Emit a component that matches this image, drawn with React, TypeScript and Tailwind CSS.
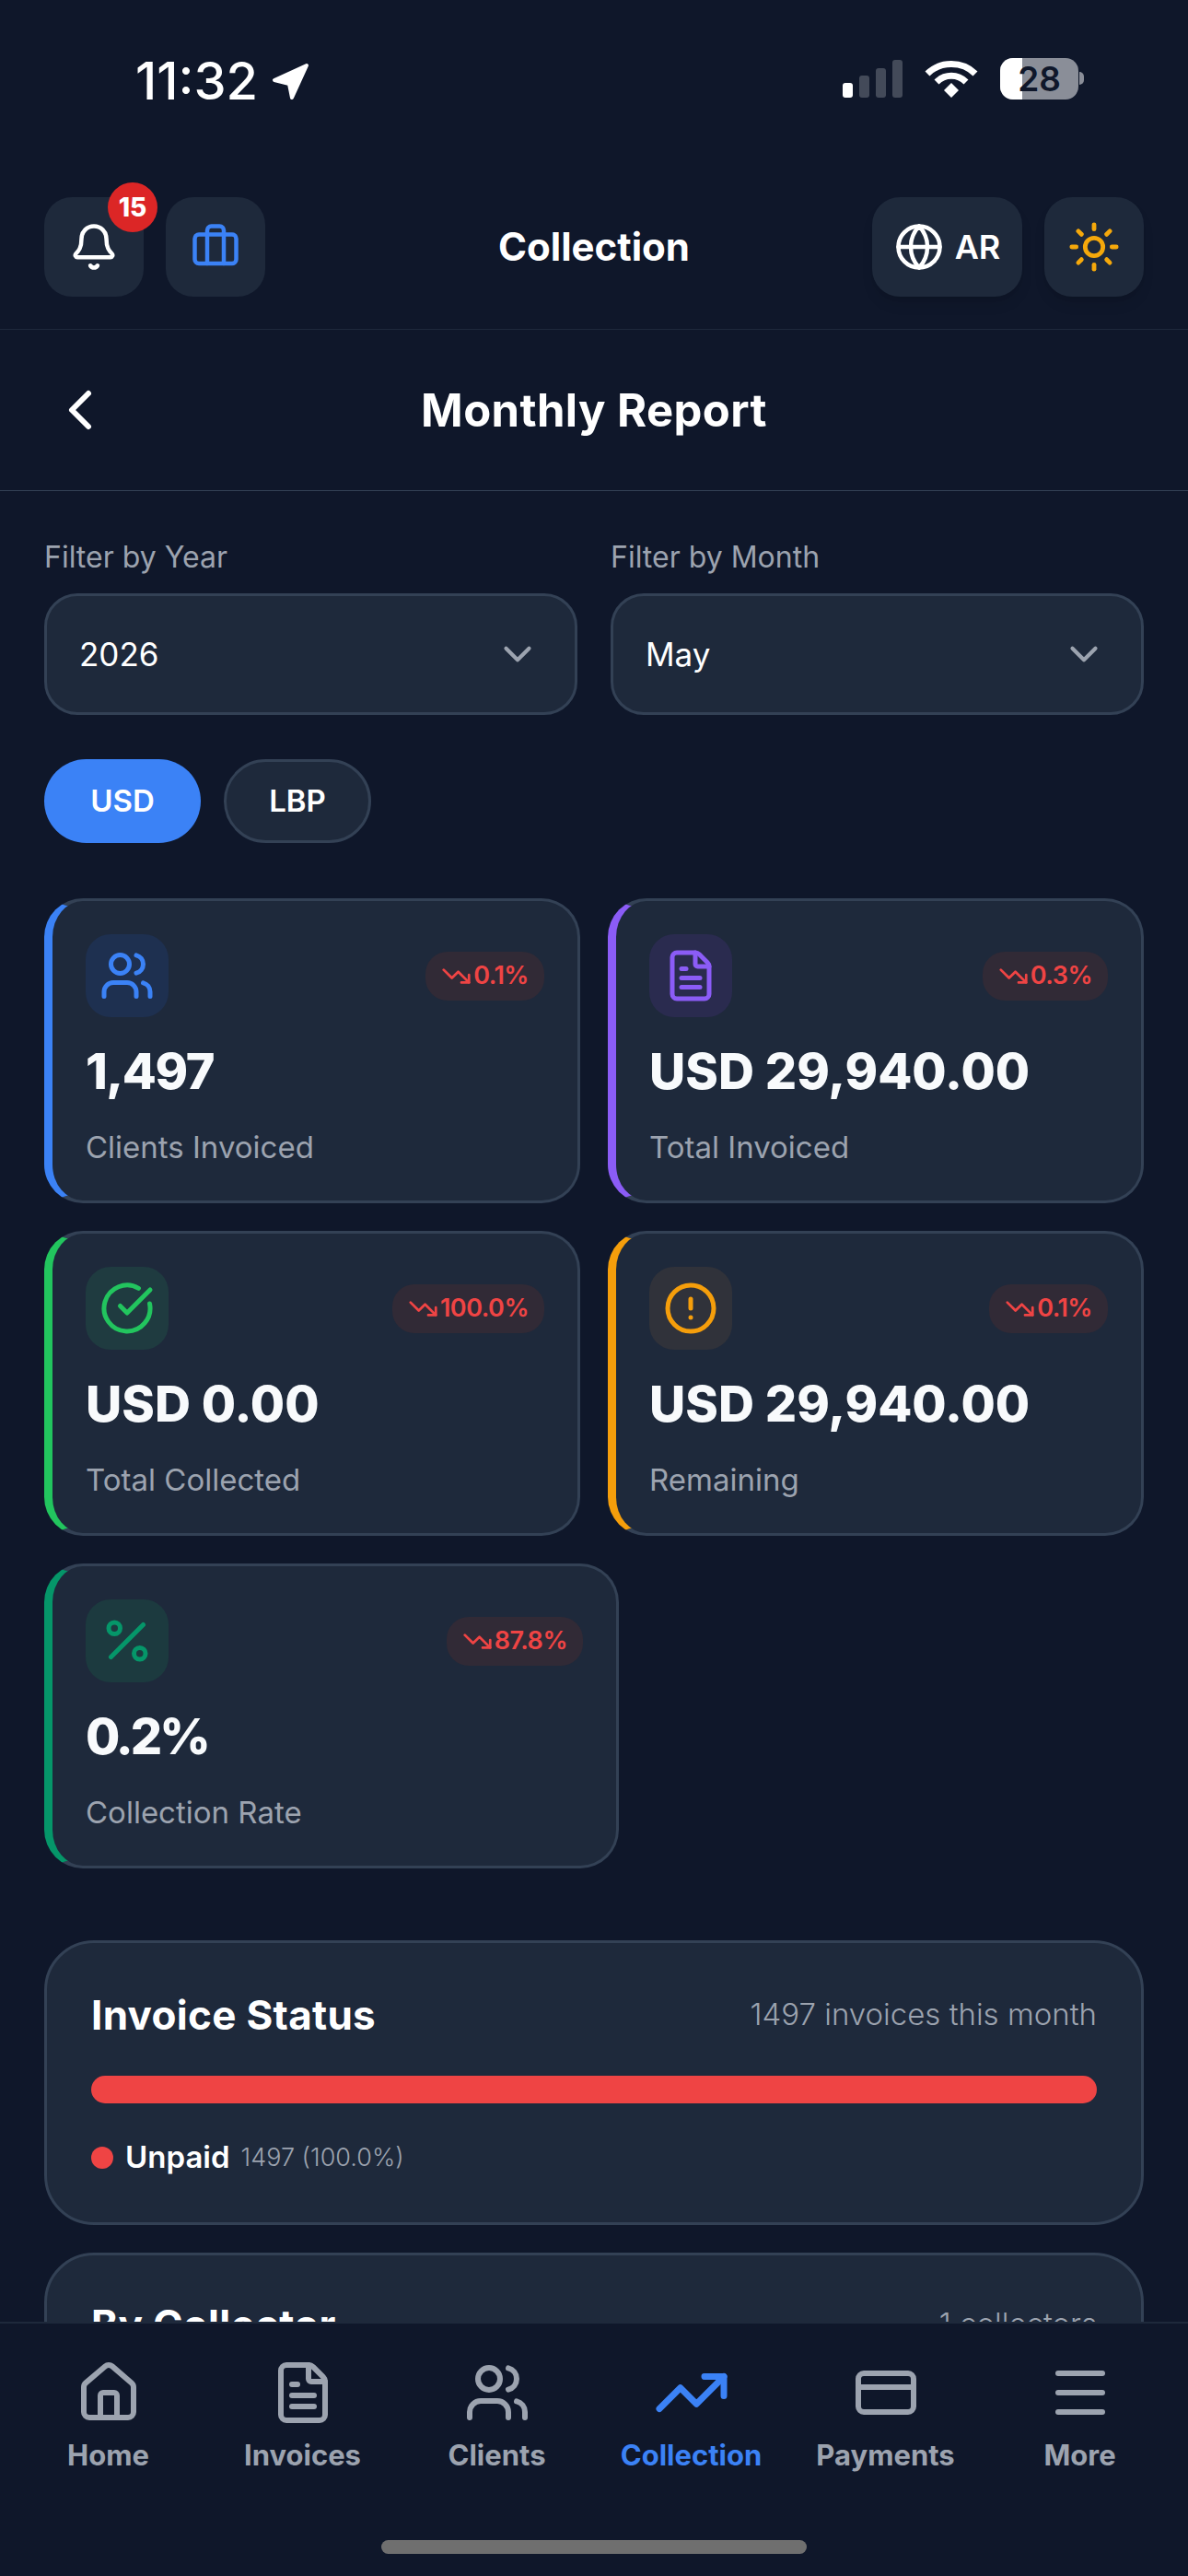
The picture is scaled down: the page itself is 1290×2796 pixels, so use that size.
import { AlertCircle, Bell, Briefcase, CheckCircle, ChevronDown, ChevronLeft, CreditCard, FileText, Globe, Home, Menu, Percent, Sun, TrendingDown, TrendingUp, Users } from "lucide-react";
import type { ReactNode } from "react";

function StatusBar() {
  return (
    <div className="h-[214px] shrink-0 flex items-start justify-between pl-[147px] pr-[113px] pt-[60px]">
      <div className="flex items-center gap-[14px] h-[56px] text-white text-[56px] font-medium leading-none">
        <span>11:32</span>
        <svg width="44" height="44" viewBox="0 0 44 44" className="fill-white stroke-white" strokeWidth="4" strokeLinejoin="round">
          <path d="M39 5 L4 21 L20 25 L23 40 Z" />
        </svg>
      </div>
      <div className="flex items-center gap-[24px] h-[50px]">
        <div className="flex items-end gap-[7px] h-[41px]">
          <div className="w-[11px] h-[16px] rounded-[3px] bg-white" />
          <div className="w-[11px] h-[24px] rounded-[3px] bg-[#434a59]" />
          <div className="w-[11px] h-[32px] rounded-[3px] bg-[#434a59]" />
          <div className="w-[11px] h-[41px] rounded-[3px] bg-[#434a59]" />
        </div>
        <svg width="58" height="42" viewBox="0 0 58 42" fill="none" stroke="white" strokeWidth="7">
          <path d="M3 16 C17 2 41 2 55 16" />
          <path d="M13 25 C22 16 36 16 45 25" />
          <path d="M21 34 L29 26 L37 34 L29 42 Z" fill="white" stroke="none" />
        </svg>
        <div className="flex items-center gap-[1px]">
          <div className="relative w-[85px] h-[45px] rounded-[14px] overflow-hidden bg-[#8a8e98] flex items-center justify-center">
            <div className="absolute left-0 top-0 bottom-0 w-[24px] bg-white" />
            <span className="relative text-[#0f172a] text-[37px] font-semibold leading-none">28</span>
          </div>
          <div className="w-[5px] h-[14px] rounded-r-full bg-[#8a8e98]" />
        </div>
      </div>
    </div>
  );
}

function TopHeader() {
  return (
    <div className="h-[144px] shrink-0 border-b border-[#1e293b] px-[48px] flex items-start">
      <div className="flex-1 flex gap-[24px]">
        <div className="relative w-[108px] h-[108px] rounded-[30px] bg-[#1e293b] flex items-center justify-center">
          <Bell size={54} strokeWidth={2} className="text-white" />
          <div className="absolute left-[69px] top-[-16px] w-[54px] h-[54px] rounded-full bg-[#dc2626] flex items-center justify-center text-white text-[28px] font-extrabold leading-none">15</div>
        </div>
        <div className="w-[108px] h-[108px] rounded-[30px] bg-[#1e293b] flex items-center justify-center">
          <Briefcase size={54} strokeWidth={2} className="text-[#3b82f6]" />
        </div>
      </div>
      <div className="h-[106px] flex items-center text-white text-[42px] font-bold">Collection</div>
      <div className="flex-1 flex justify-end gap-[24px]">
        <div className="w-[163px] h-[108px] rounded-[30px] bg-[#1e293b] shadow-lg flex items-center justify-center gap-[12px]">
          <Globe size={54} strokeWidth={2} className="text-white" />
          <span className="text-white text-[36px] font-semibold">AR</span>
        </div>
        <div className="w-[108px] h-[108px] rounded-[30px] bg-[#1e293b] shadow-lg flex items-center justify-center">
          <Sun size={58} strokeWidth={2} className="text-[#f5a80b]" />
        </div>
      </div>
    </div>
  );
}

function SubHeader() {
  return (
    <div className="h-[175px] shrink-0 border-b border-[#334155] px-[51px] flex items-center justify-between">
      <ChevronLeft size={72} strokeWidth={2} className="text-white" />
      <div className="pt-[2px] text-white text-[49px] font-bold tracking-[0.4px]">Monthly Report</div>
      <div className="w-[72px]" />
    </div>
  );
}

function Select({ label, value, className }: { label: string; value: string; className: string }) {
  return (
    <div className={className}>
      <div className="h-[36px] text-[32px] leading-[36px] text-[#9ca3af] mb-[21px]">{label}</div>
      <div className="h-[132px] rounded-[36px] bg-[#1e293b] border-[3px] border-[#334155] pl-[35px] pr-[37px] flex items-center justify-between">
        <span className="text-white text-[35px]">{value}</span>
        <ChevronDown size={50} strokeWidth={2} className="text-[#9ca3af]" />
      </div>
    </div>
  );
}

function StatCard({ icon, iconBg, bar, change, value, label, width, valueClass = "" }: { icon: ReactNode; iconBg: string; bar: string; change: string; value: string; label: string; width: string; valueClass?: string }) {
  return (
    <div className={`${width} h-[331px] rounded-[42px] bg-[#1e293b] border-[3px] border-l-[9px] ${bar} pl-[36px] pr-[36px] pt-[36px]`}>
      <div className="flex items-center justify-between">
        <div className={`w-[90px] h-[90px] rounded-[27px] ${iconBg} flex items-center justify-center`}>{icon}</div>
        <div className="h-[53px] rounded-[24px] bg-[#312a36] px-[17px] flex items-center gap-[2px] text-[#ef4444] text-[27px] font-semibold tracking-[-0.5px]">
          <TrendingDown size={33} strokeWidth={2} />
          <span>{change}</span>
        </div>
      </div>
      <div className={`mt-[18px] h-[82px] flex items-center text-[#f8fafc] text-[54px] font-extrabold leading-none whitespace-nowrap ${valueClass}`}>{value}</div>
      <div className="mt-[20px] h-[43px] flex items-center text-[#9ca3af] text-[33px]">{label}</div>
    </div>
  );
}

function NavItem({ icon, label, active }: { icon: ReactNode; label: string; active?: boolean }) {
  return (
    <div className={`w-[211px] flex flex-col items-center ${active ? "text-[#3b82f6]" : "text-[#9ca3af]"}`}>
      <div className="h-[84px] flex items-center justify-center">{icon}</div>
      <div className="mt-[4px] h-[44px] text-[31px] font-bold leading-[44px] whitespace-nowrap">{label}</div>
    </div>
  );
}

export default function App() {
  return (
    <div className="w-[1290px] h-[2796px] bg-[#0f172a] flex flex-col overflow-hidden [font-family:Inter,sans-serif]">
      <StatusBar />
      <TopHeader />
      <SubHeader />
      <main className="flex-1 min-h-0 overflow-hidden px-[48px] pt-[54px]">
        <div className="flex gap-[36px]">
          <Select label="Filter by Year" value="2026" className="flex-1" />
          <Select label="Filter by Month" value="May" className="flex-1" />
        </div>
        <div className="mt-[48px] flex gap-[25px]">
          <div className="w-[170px] h-[91px] rounded-full bg-[#3b82f6] text-white text-[33px] font-semibold flex items-center justify-center">USD</div>
          <div className="w-[160px] h-[91px] rounded-full bg-[#1e293b] border-[3px] border-[#334155] text-white text-[33px] font-semibold flex items-center justify-center">LBP</div>
        </div>
        <div className="mt-[60px] flex flex-wrap gap-x-[30px] gap-y-[30px]">
          <StatCard width="w-[582px]" bar="border-[#334155] border-l-[#3b82f6]" iconBg="bg-[#1e3050]" icon={<Users size={60} strokeWidth={2} className="text-[#3b82f6]" />} change="0.1%" value="1,497" valueClass="tracking-[-1.5px]" label="Clients Invoiced" />
          <StatCard width="w-[582px]" bar="border-[#334155] border-l-[#8b5cf6]" iconBg="bg-[#2a2b4f]" icon={<FileText size={60} strokeWidth={2} className="text-[#8b5cf6]" />} change="0.3%" value="USD 29,940.00" label="Total Invoiced" />
          <StatCard width="w-[582px]" bar="border-[#334155] border-l-[#22c55e]" iconBg="bg-[#1f3b40]" icon={<CheckCircle size={60} strokeWidth={2} className="text-[#22c55e]" />} change="100.0%" value="USD 0.00" label="Total Collected" />
          <StatCard width="w-[582px]" bar="border-[#334155] border-l-[#f59e0b]" iconBg="bg-[#30323a]" icon={<AlertCircle size={60} strokeWidth={2} className="text-[#f59e0b]" />} change="0.1%" value="USD 29,940.00" label="Remaining" />
          <StatCard width="w-[624px]" bar="border-[#334155] border-l-[#059669]" iconBg="bg-[#1c3a3f]" icon={<Percent size={60} strokeWidth={2} className="text-[#059669]" />} change="87.8%" value="0.2%" valueClass="tracking-[-3px]" label="Collection Rate" />
        </div>
        <div className="mt-[78px] h-[309px] rounded-[54px] bg-[#1e293b] border-[3px] border-[#334155] px-[48px] pt-[48px]">
          <div className="h-[60px] flex items-center justify-between">
            <div className="text-white text-[44px] font-bold tracking-[0.3px]">Invoice Status</div>
            <div className="text-[#9ca3af] text-[33px] font-light">1497 invoices this month</div>
          </div>
          <div className="mt-[36px] h-[30px] rounded-full bg-[#ef4444]" />
          <div className="mt-[39px] flex items-center h-[40px]">
            <div className="w-[24px] h-[24px] rounded-full bg-[#ef4444] mr-[13px]" />
            <div className="text-white text-[33px] font-semibold mr-[12px]">Unpaid</div>
            <div className="text-[#9ca3af] text-[27px] font-light">1497 (100.0%)</div>
          </div>
        </div>
        <div className="mt-[30px] h-[309px] rounded-[54px] bg-[#1e293b] border-[3px] border-[#334155] px-[48px] pt-[45px]">
          <div className="h-[60px] flex items-center justify-between">
            <div className="text-white text-[44px] font-bold tracking-[0.3px]">By Collector</div>
            <div className="text-[#9ca3af] text-[33px] font-light">1 collectors</div>
          </div>
        </div>
      </main>
      <nav className="h-[276px] shrink-0 bg-[#0f172a] border-t-[2px] border-[#1e293b] px-[12px] pt-[33px] relative">
        <div className="flex">
          <NavItem icon={<Home size={72} strokeWidth={2} />} label="Home" />
          <NavItem icon={<FileText size={72} strokeWidth={2} />} label="Invoices" />
          <NavItem icon={<Users size={72} strokeWidth={2} />} label="Clients" />
          <NavItem active icon={<TrendingUp size={84} strokeWidth={2} />} label="Collection" />
          <NavItem icon={<CreditCard size={72} strokeWidth={2} />} label="Payments" />
          <NavItem icon={<Menu size={72} strokeWidth={2} />} label="More" />
        </div>
        <div className="absolute left-[414px] bottom-[24px] w-[462px] h-[15px] rounded-full bg-[#6f6f6f]" />
      </nav>
    </div>
  );
}
